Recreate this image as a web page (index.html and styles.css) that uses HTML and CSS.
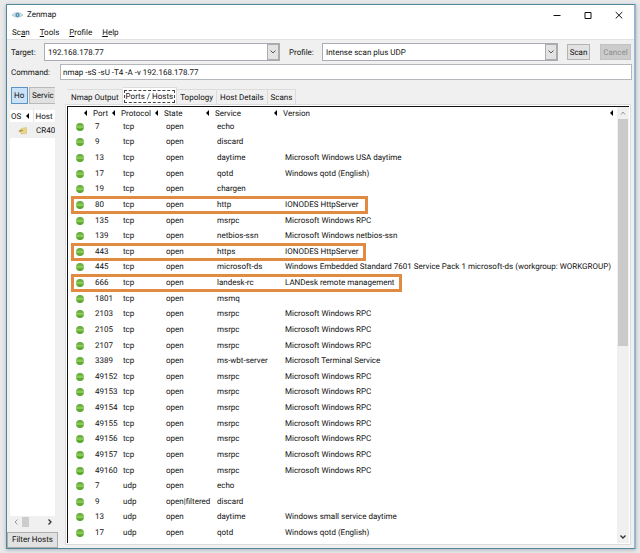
FILE: index.html
```html
<!DOCTYPE html>
<html lang="en">
<head>
<meta charset="utf-8">
<title>Zenmap</title>
<link rel="stylesheet" href="styles.css">
</head>
<body>
<div class="window">
  <header class="titlebar">
    <svg class="logo" viewBox="0 0 11 8" aria-hidden="true"><path d="M0 4Q5.500-1 11 4Q5.500 8.500 0 4Z" fill="#cfe4ee" stroke="#8fb8cb" stroke-width=".7"/><circle cx="5.500" cy="4" r="2.100" fill="#4a87a6"/><circle cx="5.500" cy="4" r=".8" fill="#dceff7"/></svg>
    <h1>Zenmap</h1>
    <div class="controls">
      <button aria-label="Minimize"><svg viewBox="0 0 8 8"><path d="M.5 4.500h7"/></svg></button>
      <button aria-label="Maximize"><svg viewBox="0 0 8 8"><path d="M1 1.500h6v6H1z"/></svg></button>
      <button aria-label="Close"><svg viewBox="0 0 8 8"><path d="M.7 1l6.600 6.500M7.300 1L.7 7.500"/></svg></button>
    </div>
  </header>
  <nav class="menu">
    <button>Sc<u>a</u>n</button><button><u>T</u>ools</button><button><u>P</u>rofile</button><button><u>H</u>elp</button>
  </nav>
  <div class="toolbar">
    <label class="target-label" for="target">Target:</label>
    <div class="combo"><input id="target" type="text" value="192.168.178.77"><button class="drop" aria-label="Recent targets"><svg viewBox="0 0 8 6"><path d="M1.500 1.500L4 4l2.500-2.500"/></svg></button></div>
    <label class="profile-label" for="profile">Profile:</label>
    <div class="combo"><select id="profile"><option>Intense scan plus UDP</option></select><span class="drop"><svg viewBox="0 0 8 6"><path d="M1.500 1.500L4 4l2.500-2.500"/></svg></span></div>
    <button class="btn scan">Scan</button>
    <button class="btn cancel" disabled>Cancel</button>
  </div>
  <div class="command">
    <label for="command">Command:</label>
    <input id="command" type="text" value="nmap -sS -sU -T4 -A -v 192.168.178.77">
  </div>
  <main class="body">
    <aside class="side">
      <div class="toggles"><button class="on">Ho</button><button>Servic</button></div>
      <div class="hostlist">
        <table>
          <thead><tr><th class="os">OS<i class="arrow"></i></th><th>Host</th></tr></thead>
          <tbody><tr><td><svg class="hosticon" viewBox="0 0 9 8"><path d="M3 1.500L8.500.5v6L3 7z" fill="#ead58a" stroke="#cdb766" stroke-width=".5"/><path d="M0 4l3-1.500v3z" fill="#c0a23d"/><path d="M2 3.500h3" stroke="#a28c42"/></svg></td><td>CR40</td></tr></tbody>
        </table>
      </div>
      <div class="hscroll"><svg viewBox="0 0 6 8"><path d="M4.500 1.500L2 4l2.500 2.500" stroke="#999"/></svg><span></span><svg class="next" viewBox="0 0 6 8"><path d="M1.500 1.500L4 4 1.500 6.500" stroke="#333" stroke-width="1.300"/></svg></div>
      <button class="filter">Filter Hosts</button>
    </aside>
    <section class="results">
      <div class="tabs" role="tablist">
        <button role="tab">Nmap Output</button><button role="tab" class="active" aria-selected="true"><span>Ports / Hosts</span></button><button role="tab">Topology</button><button role="tab">Host Details</button><button role="tab">Scans</button>
      </div>
      <div class="panel">
        <div class="scrollarea">
          <div class="listing">
          <table class="ports">
            <colgroup><col class="c-dot"><col class="c-port"><col class="c-proto"><col class="c-state"><col class="c-service"><col></colgroup>
            <thead><tr><th><i class="arrow"></i></th><th>Port<i class="arrow"></i></th><th>Protocol<i class="arrow"></i></th><th>State<i class="arrow"></i></th><th>Service<i class="arrow"></i></th><th>Version<i class="arrow"></i></th></tr></thead>
            <tbody>
              <tr><td><b class="dot"></b></td><td>7</td><td>tcp</td><td>open</td><td>echo</td><td></td></tr>
              <tr><td><b class="dot"></b></td><td>9</td><td>tcp</td><td>open</td><td>discard</td><td></td></tr>
              <tr><td><b class="dot"></b></td><td>13</td><td>tcp</td><td>open</td><td>daytime</td><td>Microsoft Windows USA daytime</td></tr>
              <tr><td><b class="dot"></b></td><td>17</td><td>tcp</td><td>open</td><td>qotd</td><td>Windows qotd (English)</td></tr>
              <tr><td><b class="dot"></b></td><td>19</td><td>tcp</td><td>open</td><td>chargen</td><td></td></tr>
              <tr><td><b class="dot"></b><span class="mark http"></span></td><td>80</td><td>tcp</td><td>open</td><td>http</td><td>IONODES HttpServer</td></tr>
              <tr><td><b class="dot"></b></td><td>135</td><td>tcp</td><td>open</td><td>msrpc</td><td>Microsoft Windows RPC</td></tr>
              <tr><td><b class="dot"></b></td><td>139</td><td>tcp</td><td>open</td><td>netbios-ssn</td><td>Microsoft Windows netbios-ssn</td></tr>
              <tr><td><b class="dot"></b><span class="mark https"></span></td><td>443</td><td>tcp</td><td>open</td><td>https</td><td>IONODES HttpServer</td></tr>
              <tr><td><b class="dot"></b></td><td>445</td><td>tcp</td><td>open</td><td>microsoft-ds</td><td>Windows Embedded Standard 7601 Service Pack 1 microsoft-ds (workgroup: WORKGROUP)</td></tr>
              <tr><td><b class="dot"></b><span class="mark landesk"></span></td><td>666</td><td>tcp</td><td>open</td><td>landesk-rc</td><td>LANDesk remote management</td></tr>
              <tr><td><b class="dot"></b></td><td>1801</td><td>tcp</td><td>open</td><td>msmq</td><td></td></tr>
              <tr><td><b class="dot"></b></td><td>2103</td><td>tcp</td><td>open</td><td>msrpc</td><td>Microsoft Windows RPC</td></tr>
              <tr><td><b class="dot"></b></td><td>2105</td><td>tcp</td><td>open</td><td>msrpc</td><td>Microsoft Windows RPC</td></tr>
              <tr><td><b class="dot"></b></td><td>2107</td><td>tcp</td><td>open</td><td>msrpc</td><td>Microsoft Windows RPC</td></tr>
              <tr><td><b class="dot"></b></td><td>3389</td><td>tcp</td><td>open</td><td>ms-wbt-server</td><td>Microsoft Terminal Service</td></tr>
              <tr><td><b class="dot"></b></td><td>49152</td><td>tcp</td><td>open</td><td>msrpc</td><td>Microsoft Windows RPC</td></tr>
              <tr><td><b class="dot"></b></td><td>49153</td><td>tcp</td><td>open</td><td>msrpc</td><td>Microsoft Windows RPC</td></tr>
              <tr><td><b class="dot"></b></td><td>49154</td><td>tcp</td><td>open</td><td>msrpc</td><td>Microsoft Windows RPC</td></tr>
              <tr><td><b class="dot"></b></td><td>49155</td><td>tcp</td><td>open</td><td>msrpc</td><td>Microsoft Windows RPC</td></tr>
              <tr><td><b class="dot"></b></td><td>49156</td><td>tcp</td><td>open</td><td>msrpc</td><td>Microsoft Windows RPC</td></tr>
              <tr><td><b class="dot"></b></td><td>49157</td><td>tcp</td><td>open</td><td>msrpc</td><td>Microsoft Windows RPC</td></tr>
              <tr><td><b class="dot"></b></td><td>49160</td><td>tcp</td><td>open</td><td>msrpc</td><td>Microsoft Windows RPC</td></tr>
              <tr><td><b class="dot"></b></td><td>7</td><td>udp</td><td>open</td><td>echo</td><td></td></tr>
              <tr><td><b class="dot"></b></td><td>9</td><td>udp</td><td>open|filtered</td><td>discard</td><td></td></tr>
              <tr><td><b class="dot"></b></td><td>13</td><td>udp</td><td>open</td><td>daytime</td><td>Windows small service daytime</td></tr>
              <tr><td><b class="dot"></b></td><td>17</td><td>udp</td><td>open</td><td>qotd</td><td>Windows qotd (English)</td></tr>
            </tbody>
          </table>
          </div>
          <div class="vscroll"><svg viewBox="0 0 8 8"><path d="M2 5.500L4 3l2 2.500" stroke="#999"/></svg><span></span><svg class="down" viewBox="0 0 8 8"><path d="M1.500 2.500L4 5l2.500-2.500" stroke="#333" stroke-width="1.400"/></svg></div>
        </div>
      </div>
    </section>
  </main>
</div>
</body>
</html>
```
FILE: styles.css
```css
* { box-sizing: border-box; }
html, body { height: 100%; }
body {
  margin: 0;
  padding: 4px 4px 4px 6px;
  background: #e9e9ea;
  font: 8px/12px Roboto, "Open Sans", sans-serif;
  text-rendering: geometricPrecision;
  color: #111;
}
button, input, select { font: inherit; color: inherit; margin: 0; border-radius: 0; text-rendering: inherit; }
button { padding: 0; white-space: nowrap; }
svg { display: block; fill: none; }
.window {
  display: flex;
  flex-direction: column;
  height: 100%;
  background: #f0f0f0;
  border: 1px solid #52879a;
  border-right: 2px solid #9ab3ce;
  box-shadow: 0 1px 4px #a9b4bd;
}

/* Title bar and menu */
.titlebar { display: flex; align-items: center; height: 20px; padding-left: 5px; background: #fff; }
.logo { width: 11px; height: 8px; }
.titlebar h1 { margin: 0 auto 0 4px; font-size: 8px; font-weight: 400; }
.controls { display: flex; }
.controls button { display: flex; align-items: center; justify-content: center; width: 31px; height: 20px; border: 0; background: none; }
.controls svg { width: 8px; height: 8px; stroke: #111; }
.menu { display: flex; gap: 10px; height: 15px; padding: 0 5px; background: #fff; border-bottom: 1px solid #e2e2e2; }
.menu button { border: 0; background: none; height: 14px; padding-top: 2px; }

/* Scan settings */
.toolbar { display: flex; align-items: center; padding: 3px 3px 3px 4px; }
.toolbar label, .command label { padding-top: 2px; }
.target-label { width: 33px; }
.profile-label { width: 33px; margin-left: 9px; }
.combo { display: flex; flex: 1; height: 18px; border: 1px solid #a9adb3; background: #fff; min-width: 0; }
.combo input, .combo select { flex: 1; min-width: 0; border: 0; padding: 1px 3px 0; background: none; appearance: none; outline: 0; }
.drop { display: flex; align-items: center; justify-content: center; width: 12px; background: #e3e3e3; border: 1px solid #adadad; }
.drop svg { width: 8px; height: 6px; stroke: #555; flex: none; }
.btn { height: 16px; padding-top: 1px; border: 1px solid #b4b4b4; background: #e2e2e2; }
.scan { width: 23px; margin-left: 9px; }
.cancel { width: 31px; margin-left: 10px; background: #ccc; border-color: #c2c2c2; color: #8c8c8c; }
.command { display: flex; align-items: center; padding: 0 2px 7px 4px; }
.command label { width: 49px; }
.command input { flex: 1; height: 16px; border: 1px solid #b4b7bc; background: #fff; padding: 0 2px; outline: 0; }

/* Host list */
.body { display: flex; flex: 1; min-height: 0; }
.side { display: flex; flex-direction: column; width: 58px; }
.toggles { display: flex; gap: 1px; width: 48px; padding-left: 4px; margin-bottom: 6px; height: 17px; overflow: hidden; }
.toggles button { flex: 1; border: 1px solid #b9b9b9; border-right: 0; background: #e1e1e1; text-align: left; padding-left: 2px; overflow: hidden; }
.toggles .on { flex: none; width: 17px; border: 1px solid #5b94c4; background: #cbe2f6; }
.hostlist { flex: 1; margin-left: 3px; width: 45px; background: #fff; overflow: hidden; }
.hostlist table { border-collapse: collapse; width: 45px; table-layout: fixed; }
.hostlist th, .hostlist td { padding: 2px 0 0 2px; text-align: left; font-weight: 400; white-space: nowrap; }
.hostlist th { height: 12px; position: relative; line-height: 10px; }
.hostlist td { height: 16px; background: #f0f0f0; padding-left: 3px; }
.hostlist .os { width: 23px; padding-left: 1px; border-right: 1px solid #e5e5e5; }
.hosticon { width: 9px; height: 8px; margin-left: 5px; }
.hscroll { display: flex; align-items: center; height: 12px; width: 45px; margin: 0 0 4px 3px; }
.hscroll svg { width: 6px; height: 8px; margin-left: 3px; }
.hscroll span { width: 7px; height: 10px; margin-left: 3px; background: #cdcdcd; }
.hscroll .next { margin-left: auto; margin-right: 2px; }
.filter { width: 51px; height: 16px; border: 1px solid #adadad; background: #e1e1e1; }

/* Tabs and port table */
.results { display: flex; flex-direction: column; flex: 1; min-width: 0; padding: 0 3px 3px 0; }
.tabs { display: flex; height: 17px; padding-left: 2px; }
.tabs button { height: 15px; margin-top: 2px; border: 1px solid #dcdcdc; border-width: 1px 1px 0 0; background: #f0f0f0; padding: 1px 3px 0; }
.tabs button:first-child { padding-left: 4px; }
.tabs .active { height: 17px; margin-top: 0; background: #fff; padding: 0 1px; }
.tabs .active span { display: block; border: 1px dashed #444; padding: 1px 1px 0; line-height: 10px; }
.panel { display: flex; flex: 1; min-height: 0; padding: 1px; border: 1px solid #dcdcdc; background: #fff; }
.scrollarea { display: flex; flex: 1; min-width: 0; border: solid #111; border-width: 1px 0 0 1px; overflow: hidden; }
.listing { flex: 1; min-width: 0; padding-bottom: 2px; }
.ports { width: 100%; height: 100%; border-collapse: collapse; table-layout: fixed; }
.ports th, .ports td { padding: 0 0 0 4px; text-align: left; font-weight: 400; white-space: nowrap; line-height: 12px; position: relative; }
.ports th { height: 12px; padding: 2px 0 0 2px; line-height: 10px; }
.ports td:first-child { padding-left: 8px; }
.c-dot { width: 23px; }
.c-port { width: 28px; }
.c-proto { width: 43px; }
.c-state { width: 51px; }
.c-service { width: 68px; }
.arrow { position: absolute; right: 4px; top: 3px; border: solid transparent; border-width: 3px 3px 3px 0; border-right-color: #000; }
.dot { display: block; width: 8px; height: 8px; border-radius: 50%; background: linear-gradient(#5aa336, #7cc04c 40%, #a3d478 50%, #66b335 65%, #529c2c); }
.mark { position: absolute; z-index: 1; left: 3px; top: -1px; bottom: -1px; border: 3px solid #e08a42; pointer-events: none; }
.http { width: 297px; }
.https { width: 295px; }
.landesk { width: 331px; }
.vscroll { display: flex; flex-direction: column; align-items: center; width: 12px; background: #f0f0f0; }
.vscroll svg { width: 8px; height: 8px; margin: 2px 0; }
.vscroll span { width: 10px; height: 52%; background: #cacaca; }
.vscroll .down { margin-top: auto; }
```
